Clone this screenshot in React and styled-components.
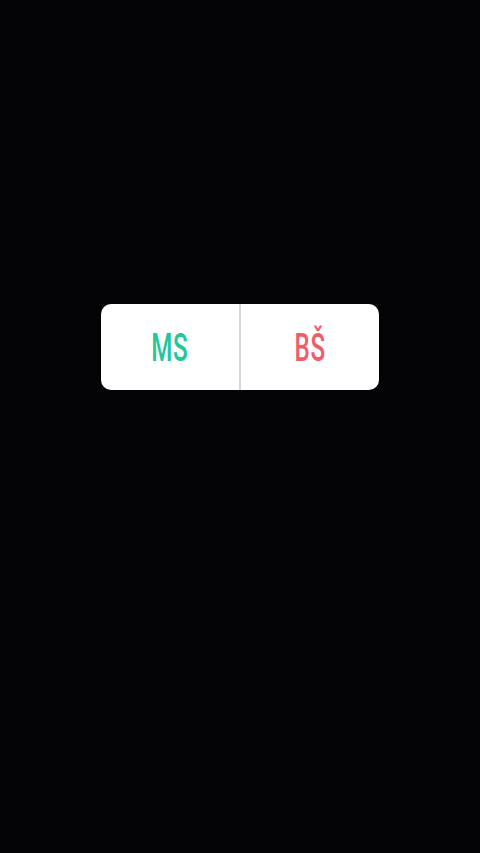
import styled, { createGlobalStyle } from "styled-components";

const Global = createGlobalStyle`
  html, body {
    margin: 0;
    padding: 0;
    background: #040406;
  }
`;

const Screen = styled.div`
  width: 480px;
  height: 853px;
  background: #040406;
  padding-top: 304px;
  box-sizing: border-box;
  display: flex;
  flex-direction: column;
  align-items: center;
`;

const Poll = styled.div`
  width: 278px;
  height: 86px;
  background: #ffffff;
  border-radius: 10px;
  display: flex;
  overflow: hidden;
`;

const Option = styled.div`
  flex: 1;
  display: flex;
  align-items: center;
  justify-content: center;
  border-left: ${(p) => (p.divided ? "2px solid #d6d6d6" : "none")};
`;

const Label = styled.span`
  font-family: Roboto, "Liberation Sans", sans-serif;
  font-weight: 500;
  font-size: 39px;
  line-height: 1;
  color: ${(p) => p.color};
  display: inline-block;
  transform: scaleX(0.62);
  margin-top: 2px;
  letter-spacing: 1px;
`;

export default function App() {
  return (
    <>
      <Global />
      <Screen>
        <Poll>
          <Option>
            <Label color="#23c69b">MS</Label>
          </Option>
          <Option divided>
            <Label color="#ef5d6c">BŠ</Label>
          </Option>
        </Poll>
      </Screen>
    </>
  );
}
